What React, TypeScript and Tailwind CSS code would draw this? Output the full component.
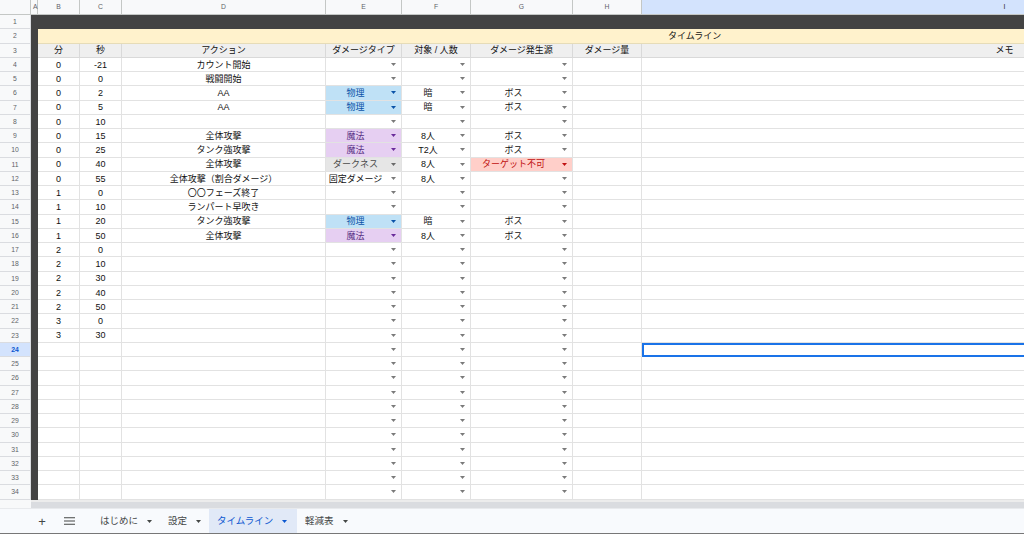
import React from "react";

// column widths: row header, A, B..I
const COL_LETTERS = ["", "A", "B", "C", "D", "E", "F", "G", "H", "I"];

type Row = [string, string, string, string, string, string];

const ROWS: Row[] = [
  ["0", "-21", "カウント開始", "", "", ""],
  ["0", "0", "戦闘開始", "", "", ""],
  ["0", "2", "AA", "物理", "暗", "ボス"],
  ["0", "5", "AA", "物理", "暗", "ボス"],
  ["0", "10", "", "", "", ""],
  ["0", "15", "全体攻撃", "魔法", "8人", "ボス"],
  ["0", "25", "タンク強攻撃", "魔法", "T2人", "ボス"],
  ["0", "40", "全体攻撃", "ダークネス", "8人", "ターゲット不可"],
  ["0", "55", "全体攻撃（割合ダメージ）", "固定ダメージ", "8人", ""],
  ["1", "0", "〇〇フェーズ終了", "", "", ""],
  ["1", "10", "ランパート早吹き", "", "", ""],
  ["1", "20", "タンク強攻撃", "物理", "暗", "ボス"],
  ["1", "50", "全体攻撃", "魔法", "8人", "ボス"],
  ["2", "0", "", "", "", ""],
  ["2", "10", "", "", "", ""],
  ["2", "30", "", "", "", ""],
  ["2", "40", "", "", "", ""],
  ["2", "50", "", "", "", ""],
  ["3", "0", "", "", "", ""],
  ["3", "30", "", "", "", ""],
];

const CHIP: Record<string, { bg: string; text: string; arrow: string }> = {
  物理: { bg: "bg-[#bfe1f6]", text: "text-[#0a53a8]", arrow: "text-[#0a53a8]" },
  魔法: { bg: "bg-[#e6cff2]", text: "text-[#5a3286]", arrow: "text-[#6a2c9a]" },
  ダークネス: { bg: "bg-[#e6e6e6]", text: "text-[#4a4a4a]", arrow: "text-[#6a6a6a]" },
  ターゲット不可: { bg: "bg-[#ffcfc9]", text: "text-[#c01010]", arrow: "text-[#c01010]" },
};

const cell = "border-r border-b border-[#e2e2e2] flex items-center justify-center whitespace-nowrap overflow-hidden pt-[2px]";
const rowHead = "bg-[#f8f9fa] border-r border-b border-[#dadce0] flex items-center justify-center text-[6.8px] text-[#5f6368] pt-[1px]";

function Arrow() {
  return (
    <svg width="5" height="3" viewBox="0 0 5 3">
      <path d="M0 0h5L2.5 3z" fill="currentColor" />
    </svg>
  );
}

function DropCell({ value }: { value: string }) {
  const s = CHIP[value];
  return (
    <div className={`flex items-center border-r border-b border-[#e2e2e2] overflow-hidden ${s ? s.bg : "bg-white"}`}>
      <span className={`flex-1 text-center whitespace-nowrap pt-[2px] ${s ? s.text : "text-[#111]"}`}>{value}</span>
      <span className={`w-[16px] shrink-0 flex justify-center ${s ? s.arrow : "text-[#7a7a7a]"}`}>
        <Arrow />
      </span>
    </div>
  );
}

export default function App() {
  const dataRows: (Row | null)[] = [...ROWS];
  while (dataRows.length < 31) dataRows.push(null);

  return (
    <div className="w-[1024px] h-[534px] overflow-hidden bg-white flex flex-col font-['Liberation_Sans','Noto_Sans_CJK_JP',sans-serif] text-[9px] text-[#111]">
      {/* Sheet grid */}
      <div className="h-[500px] overflow-hidden">
        <div className="grid w-[1368px] grid-cols-[31px_7px_42px_42px_204px_76px_69px_102px_69px_726px] grid-rows-[15px_repeat(34,14.26px)]">
          {/* Column headers */}
          {COL_LETTERS.map((l, i) => (
            <div
              key={l + i}
              className={`border-r border-b border-[#c4c7c5] flex items-center text-[6.8px] pt-[1px] ${
                l === "I" ? "bg-[#d3e3fd] text-[#1f1f1f]" : "bg-[#f8f9fa] text-[#5f6368]"
              } ${l === "A" ? "justify-start pl-[2px]" : "justify-center"}`}
            >
              {l}
            </div>
          ))}

          {/* Row 1 */}
          <div className={rowHead}>1</div>
          <div className="col-span-9 bg-[#434343]" />

          {/* Row 2 */}
          <div className={rowHead}>2</div>
          <div className="bg-[#434343]" />
          <div className="col-span-8 bg-[#fff2cc] border-b border-[#e6dcb8] flex items-center pl-[630px] pt-[2px]">タイムライン</div>

          {/* Row 3 */}
          <div className={rowHead}>3</div>
          <div className="bg-[#434343]" />
          {["分", "秒", "アクション", "ダメージタイプ", "対象 / 人数", "ダメージ発生源", "ダメージ量", "メモ"].map((h) => (
            <div key={h} className="bg-[#efefef] border-r border-b border-[#d9d9d9] flex items-center justify-center whitespace-nowrap pt-[2px]">
              {h}
            </div>
          ))}

          {/* Rows 4-34 */}
          {dataRows.map((r, idx) => {
            const n = idx + 4;
            const selected = n === 24;
            return (
              <React.Fragment key={n}>
                <div className={selected ? "bg-[#d3e3fd] border-r border-b border-[#dadce0] flex items-center justify-center text-[6.8px] font-bold text-[#0b57d0] pt-[1px]" : rowHead}>
                  {n}
                </div>
                <div className="bg-[#434343]" />
                <div className={cell}>{r?.[0]}</div>
                <div className={cell}>{r?.[1]}</div>
                <div className={cell}>{r?.[2]}</div>
                <DropCell value={r?.[3] ?? ""} />
                <DropCell value={r?.[4] ?? ""} />
                <DropCell value={r?.[5] ?? ""} />
                <div className={cell} />
                <div className={selected ? "border-2 border-[#1a73e8]" : cell} />
              </React.Fragment>
            );
          })}
        </div>
      </div>

      {/* Horizontal scrollbar */}
      <div className="h-[8px] flex">
        <div className="w-[31px] bg-[#f8f9fa]" />
        <div className="flex-1 bg-[#dadce0] border-t-2 border-[#ececec]" />
      </div>

      {/* Sheet tabs */}
      <div className="h-[25px] bg-[#f8fafd] border-t border-[#e8eaed] flex items-stretch text-[9.5px] text-[#444746]">
        <div className="w-[36px]" />
        <div className="w-[12px] flex items-center justify-center text-[13px] leading-none text-[#444746]">+</div>
        <div className="w-[15px]" />
        <div className="w-[12px] flex items-center justify-center">
          <svg width="11" height="8" viewBox="0 0 11 8">
            <path d="M0 0.75h11M0 4h11M0 7.25h11" stroke="#444746" strokeWidth="1.2" />
          </svg>
        </div>
        <div className="w-[17px]" />
        {[
          { label: "はじめに", w: "w-[68px]", active: false },
          { label: "設定", w: "w-[49px]", active: false },
          { label: "タイムライン", w: "w-[88px]", active: true },
          { label: "軽減表", w: "w-[64px]", active: false },
        ].map((t) => (
          <div
            key={t.label}
            className={`${t.w} pl-[8px] flex items-center gap-[9px] ${t.active ? "bg-[#e1e9f7] text-[#0b57d0]" : ""}`}
          >
            <span>{t.label}</span>
            <Arrow />
          </div>
        ))}
      </div>
      <div className="h-[1px] bg-[#777]" />
    </div>
  );
}
